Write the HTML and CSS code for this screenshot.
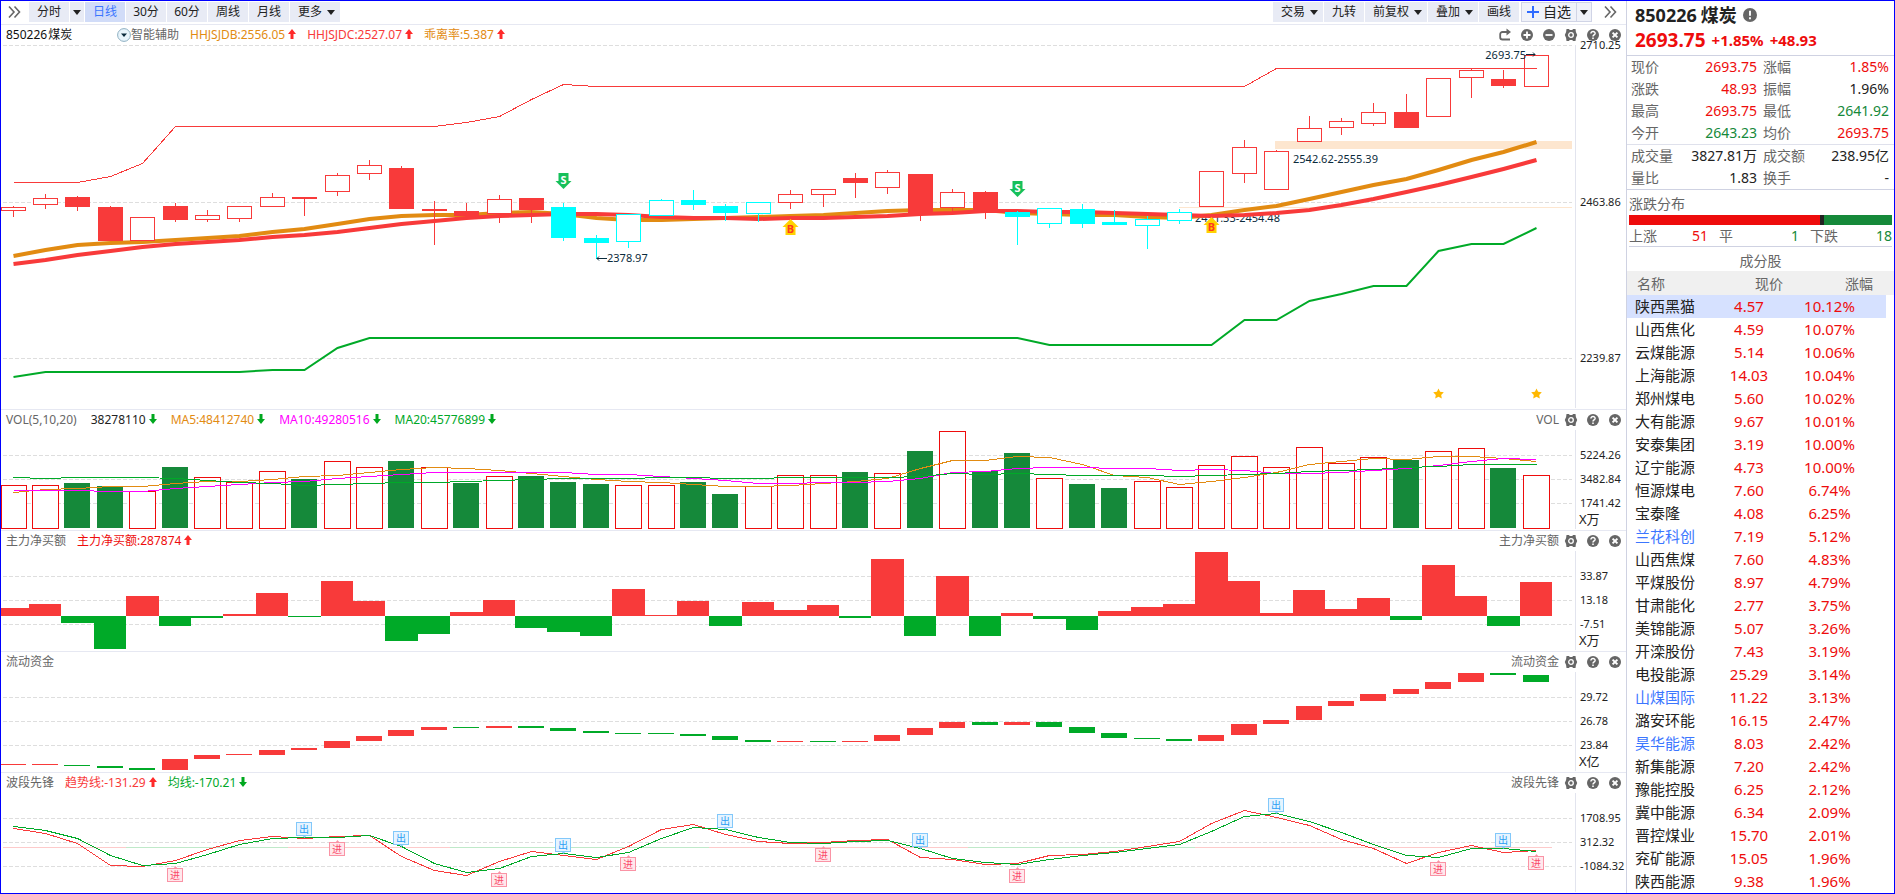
FILE: index.html
```html
<!DOCTYPE html>
<html lang="zh-CN">

<head>
    <meta charset="UTF-8">
    <meta name="viewport" content="width=device-width, initial-scale=1.0">
    <title>850226 煤炭</title>
    <link rel="stylesheet" href="styles.css">
</head>

<body>
    <!-- Shared icons -->
    <svg class="sprite" aria-hidden="true">
        <symbol id="i-chevrons" viewBox="0 0 14 14"><path d="M2 1.5 7 7l-5 5.5M7.5 1.5l5 5.5-5 5.5" fill="none" stroke="currentColor" stroke-width="1.6"/></symbol>
        <symbol id="i-share" viewBox="0 0 14 14"><path d="M10 4H4.5A2.3 2.3 0 0 0 2.200 6.300v2.900a2.300 2.300 0 0 0 2.300 2.300H12" fill="none" stroke="currentColor" stroke-width="1.8"/><path d="M8.500 0.500 13 4 8.500 7.500z" fill="currentColor"/></symbol>
        <symbol id="i-plus" viewBox="0 0 14 14"><circle cx="7" cy="7" r="6" fill="currentColor"/><path d="M3.500 7h7M7 3.500v7" stroke="#fff" stroke-width="1.8"/></symbol>
        <symbol id="i-minus" viewBox="0 0 14 14"><circle cx="7" cy="7" r="6" fill="currentColor"/><path d="M3.500 7h7" stroke="#fff" stroke-width="1.8"/></symbol>
        <symbol id="i-gear" viewBox="0 0 14 14"><path d="M2.500 1h2.500l.7.9h2.600L9 1h2.500l.4 3L13.200 7l-1.300 3-.4 3H9l-.7-.9H5.700L5 13H2.500l-.4-3L.8 7l1.300-3z" fill="currentColor"/><circle cx="7" cy="7" r="2.300" fill="none" stroke="#fff" stroke-width="1.3"/></symbol>
        <symbol id="i-help" viewBox="0 0 14 14"><circle cx="7" cy="7" r="6" fill="currentColor"/><path d="M4.900 5.600C4.900 2.700 9.200 3 9.100 5.400 9 6.900 7 6.800 7 8.500" fill="none" stroke="#fff" stroke-width="1.5"/><path d="M6.200 9.500h1.600V11H6.200z" fill="#fff"/></symbol>
        <symbol id="i-close" viewBox="0 0 14 14"><circle cx="7" cy="7" r="6" fill="currentColor"/><path d="m4.600 4.600 4.800 4.800M9.400 4.600 4.600 9.400" stroke="#fff" stroke-width="2"/></symbol>
        <symbol id="i-info" viewBox="0 0 14 14"><circle cx="7" cy="7" r="7" fill="currentColor"/><path d="M7 2.800v5M7 9.200v2" stroke="#fff" stroke-width="1.9"/></symbol>
        <symbol id="i-up" viewBox="0 0 8 10"><path d="M4 0 8 5H5.500v5h-3V5H0z" fill="currentColor"/></symbol>
        <symbol id="i-down" viewBox="0 0 8 10"><path d="M4 10 0 5h2.500V0h3v5H8z" fill="currentColor"/></symbol>
    </svg>

    <div class="app">
        <main class="charts">
            <nav class="toolbar">
                <button class="chevrons" aria-label="收起"><svg><use href="#i-chevrons"/></svg></button>
                <div class="tool-group">
                    <button class="tool">分时</button>
                    <button class="tool caret-only" aria-label="分时选项"><i class="caret"></i></button>
                    <button class="tool active">日线</button>
                    <button class="tool">30分</button>
                    <button class="tool">60分</button>
                    <button class="tool">周线</button>
                    <button class="tool">月线</button>
                    <button class="tool with-caret">更多<i class="caret"></i></button>
                </div>
                <div class="tool-group right">
                    <button class="tool with-caret">交易<i class="caret"></i></button>
                    <button class="tool">九转</button>
                    <button class="tool with-caret">前复权<i class="caret"></i></button>
                    <button class="tool with-caret">叠加<i class="caret"></i></button>
                    <button class="tool">画线</button>
                    <div class="favorite">
                        <button class="add"><svg viewBox="0 0 12 12"><path d="M0 6h12M6 0v12" stroke="#2f6bff" stroke-width="2"/></svg>自选</button>
                        <button class="add-more" aria-label="自选分组"><i class="caret"></i></button>
                    </div>
                </div>
                <button class="chevrons" aria-label="展开"><svg><use href="#i-chevrons"/></svg></button>
            </nav>

            <section class="panel main-panel">
                <header class="panel-head">
                    <span class="stock"><span>850226</span><span>煤炭</span></span>
                    <button class="assist"><svg viewBox="0 0 14 14"><circle cx="7" cy="7" r="6.4" fill="#e8f4fb" stroke="#8fb0c2"/><path d="M4 5.500h6L7 9z" fill="#0b2b3c"/></svg>智能辅助</button>
                    <span class="orange">HHJSJDB:2556.05<svg class="arrow up"><use href="#i-up"/></svg></span>
                    <span class="red">HHJSJDC:2527.07<svg class="arrow up"><use href="#i-up"/></svg></span>
                    <span class="orange">乖离率:5.387<svg class="arrow up"><use href="#i-up"/></svg></span>
                    <div class="actions">
                        <button aria-label="复权"><svg><use href="#i-share"/></svg></button>
                        <button aria-label="放大"><svg><use href="#i-plus"/></svg></button>
                        <button aria-label="缩小"><svg><use href="#i-minus"/></svg></button>
                        <button aria-label="设置"><svg><use href="#i-gear"/></svg></button>
                        <button aria-label="帮助"><svg><use href="#i-help"/></svg></button>
                        <button aria-label="关闭"><svg><use href="#i-close"/></svg></button>
                    </div>
                </header>
                <svg class="plot" id="kline"></svg>
            </section>

            <section class="panel">
                <header class="panel-head wide">
                    <span class="name">VOL(5,10,20)</span>
                    <span class="black">38278110<svg class="arrow down"><use href="#i-down"/></svg></span>
                    <span class="orange">MA5:48412740<svg class="arrow down"><use href="#i-down"/></svg></span>
                    <span class="magenta">MA10:49280516<svg class="arrow down"><use href="#i-down"/></svg></span>
                    <span class="green">MA20:45776899<svg class="arrow down"><use href="#i-down"/></svg></span>
                    <div class="actions">
                        <span class="tag">VOL</span>
                        <button aria-label="设置"><svg><use href="#i-gear"/></svg></button>
                        <button aria-label="帮助"><svg><use href="#i-help"/></svg></button>
                        <button aria-label="关闭"><svg><use href="#i-close"/></svg></button>
                    </div>
                </header>
                <svg class="plot" id="volume"></svg>
            </section>

            <section class="panel">
                <header class="panel-head">
                    <span class="name">主力净买额</span>
                    <span class="strong-red">主力净买额:287874<svg class="arrow up"><use href="#i-up"/></svg></span>
                    <div class="actions">
                        <span class="tag">主力净买额</span>
                        <button aria-label="设置"><svg><use href="#i-gear"/></svg></button>
                        <button aria-label="帮助"><svg><use href="#i-help"/></svg></button>
                        <button aria-label="关闭"><svg><use href="#i-close"/></svg></button>
                    </div>
                </header>
                <svg class="plot" id="netbuy"></svg>
            </section>

            <section class="panel">
                <header class="panel-head">
                    <span class="name">流动资金</span>
                    <div class="actions">
                        <span class="tag">流动资金</span>
                        <button aria-label="设置"><svg><use href="#i-gear"/></svg></button>
                        <button aria-label="帮助"><svg><use href="#i-help"/></svg></button>
                        <button aria-label="关闭"><svg><use href="#i-close"/></svg></button>
                    </div>
                </header>
                <svg class="plot" id="funds"></svg>
            </section>

            <section class="panel">
                <header class="panel-head">
                    <span class="name">波段先锋</span>
                    <span class="red">趋势线:-131.29<svg class="arrow up"><use href="#i-up"/></svg></span>
                    <span class="green">均线:-170.21<svg class="arrow down"><use href="#i-down"/></svg></span>
                    <div class="actions">
                        <span class="tag">波段先锋</span>
                        <button aria-label="设置"><svg><use href="#i-gear"/></svg></button>
                        <button aria-label="帮助"><svg><use href="#i-help"/></svg></button>
                        <button aria-label="关闭"><svg><use href="#i-close"/></svg></button>
                    </div>
                </header>
                <svg class="plot" id="wave"></svg>
            </section>
        </main>

        <aside class="side">
            <header class="quote-head">
                <h1><span>850226</span><span>煤炭</span><svg><use href="#i-info"/></svg></h1>
                <p><span class="price">2693.75</span><span>+1.85%</span><span>+48.93</span></p>
            </header>

            <dl class="quote">
                <div><dt>现价</dt><dd class="rise">2693.75</dd></div>
                <div><dt>涨幅</dt><dd class="rise">1.85%</dd></div>
                <div><dt>涨跌</dt><dd class="rise">48.93</dd></div>
                <div><dt>振幅</dt><dd>1.96%</dd></div>
                <div><dt>最高</dt><dd class="rise">2693.75</dd></div>
                <div><dt>最低</dt><dd class="fall">2641.92</dd></div>
                <div><dt>今开</dt><dd class="fall">2643.23</dd></div>
                <div><dt>均价</dt><dd class="rise">2693.75</dd></div>
            </dl>
            <dl class="quote">
                <div><dt>成交量</dt><dd>3827.81万</dd></div>
                <div><dt>成交额</dt><dd>238.95亿</dd></div>
                <div><dt>量比</dt><dd>1.83</dd></div>
                <div><dt>换手</dt><dd>-</dd></div>
            </dl>

            <section class="spread">
                <h2>涨跌分布</h2>
                <div class="spread-bar">
                    <span class="bar-up" style="flex-grow: 51"></span>
                    <span class="bar-flat"></span>
                    <span class="bar-down" style="flex-grow: 18"></span>
                </div>
                <dl>
                    <div><dt>上涨</dt><dd class="rise">51</dd></div>
                    <div><dt>平</dt><dd class="fall">1</dd></div>
                    <div><dt>下跌</dt><dd class="fall">18</dd></div>
                </dl>
            </section>

            <h2 class="list-title">成分股</h2>
            <table class="stocks">
                <thead>
                    <tr><th>名称</th><th>现价</th><th>涨幅</th></tr>
                </thead>
                <tbody>
                    <tr class="selected"><td>陕西黑猫</td><td>4.57</td><td>10.12%</td></tr>
                    <tr><td>山西焦化</td><td>4.59</td><td>10.07%</td></tr>
                    <tr><td>云煤能源</td><td>5.14</td><td>10.06%</td></tr>
                    <tr><td>上海能源</td><td>14.03</td><td>10.04%</td></tr>
                    <tr><td>郑州煤电</td><td>5.60</td><td>10.02%</td></tr>
                    <tr><td>大有能源</td><td>9.67</td><td>10.01%</td></tr>
                    <tr><td>安泰集团</td><td>3.19</td><td>10.00%</td></tr>
                    <tr><td>辽宁能源</td><td>4.73</td><td>10.00%</td></tr>
                    <tr><td>恒源煤电</td><td>7.60</td><td>6.74%</td></tr>
                    <tr><td>宝泰隆</td><td>4.08</td><td>6.25%</td></tr>
                    <tr class="watched"><td>兰花科创</td><td>7.19</td><td>5.12%</td></tr>
                    <tr><td>山西焦煤</td><td>7.60</td><td>4.83%</td></tr>
                    <tr><td>平煤股份</td><td>8.97</td><td>4.79%</td></tr>
                    <tr><td>甘肃能化</td><td>2.77</td><td>3.75%</td></tr>
                    <tr><td>美锦能源</td><td>5.07</td><td>3.26%</td></tr>
                    <tr><td>开滦股份</td><td>7.43</td><td>3.19%</td></tr>
                    <tr><td>电投能源</td><td>25.29</td><td>3.14%</td></tr>
                    <tr class="watched"><td>山煤国际</td><td>11.22</td><td>3.13%</td></tr>
                    <tr><td>潞安环能</td><td>16.15</td><td>2.47%</td></tr>
                    <tr class="watched"><td>昊华能源</td><td>8.03</td><td>2.42%</td></tr>
                    <tr><td>新集能源</td><td>7.20</td><td>2.42%</td></tr>
                    <tr><td>豫能控股</td><td>6.25</td><td>2.12%</td></tr>
                    <tr><td>冀中能源</td><td>6.34</td><td>2.09%</td></tr>
                    <tr><td>晋控煤业</td><td>15.70</td><td>2.01%</td></tr>
                    <tr><td>兖矿能源</td><td>15.05</td><td>1.96%</td></tr>
                    <tr><td>陕西能源</td><td>9.38</td><td>1.96%</td></tr>
                </tbody>
            </table>
        </aside>
    </div>

    <script src="charts.js"></script>
</body>

</html>
```
FILE: styles.css
```css
* {
    box-sizing: border-box;
}

body {
    margin: 0;
    font-family: "Noto Sans", "Noto Sans CJK SC", sans-serif;
    font-size: 12px;
    color: #222;
    background-color: #fff;
}

h1, h2, p, dl, dd {
    margin: 0;
}

button {
    border: none;
    background: none;
    padding: 0;
    margin: 0;
    font: inherit;
    color: inherit;
    cursor: pointer;
}

.sprite {
    display: none;
}

.app {
    display: grid;
    grid-template-columns: minmax(0, 1fr) 268px;
    height: 100vh;
    border: 1px solid #0000ff;
    overflow: hidden;
}

.charts {
    display: flex;
    flex-direction: column;
    min-height: 0;
}

/* Toolbar */
.toolbar {
    display: flex;
    align-items: center;
    height: 24px;
    padding: 0 9px 1px 6px;
    gap: 8px;
    border-bottom: 1px solid #e6e8f2;
    flex: none;
}

.chevrons {
    display: flex;
    color: #666;
}

.chevrons svg {
    width: 14px;
    height: 14px;
}

.tool-group {
    display: flex;
    align-items: center;
    gap: 1px;
}

.tool-group.right {
    margin-left: auto;
}

.tool {
    display: flex;
    align-items: center;
    justify-content: center;
    gap: 5px;
    height: 20px;
    min-width: 40px;
    line-height: 20px;
    background-color: #e8ebf5;
}

.tool.active {
    background-color: #d1dcf8;
    color: #3b76ff;
}

.tool.with-caret {
    padding: 0 5px 0 8px;
}

.tool.caret-only {
    min-width: 14px;
    width: 14px;
}

.caret {
    border: 4px solid transparent;
    border-top: 5px solid #222;
    border-bottom: none;
}

.favorite {
    display: flex;
    height: 20px;
    margin: 0 3px 0 1px;
    border: 1px solid #d0d4e6;
    background-color: #f0f2f9;
}

.add {
    display: flex;
    align-items: center;
    gap: 4px;
    padding: 0 5px;
    font-size: 14px;
    line-height: 18px;
}

.add svg {
    width: 12px;
    height: 12px;
}

.add-more {
    padding: 0 3px;
    border-left: 1px solid #d0d4e6;
}

.add-more .caret {
    display: block;
}

/* Chart panels */
.panel {
    display: flex;
    flex-direction: column;
    height: 121px;
    flex: none;
    border-bottom: 1px solid #e6e8f2;
}

.main-panel {
    flex: 1;
    min-height: 0;
}

.panel:last-child {
    border-bottom: none;
    height: 120px;
}

.panel-head {
    display: flex;
    align-items: center;
    gap: 11px;
    height: 20px;
    padding: 0 4px 0 5px;
    line-height: 20px;
    white-space: nowrap;
    flex: none;
}

.panel-head.wide {
    gap: 14px;
}

.stock {
    display: flex;
    gap: 1px;
    width: 100px;
    color: #111;
}

.assist {
    display: flex;
    align-items: center;
    color: #666;
}

.assist svg {
    width: 14px;
    height: 14px;
}

.name, .tag {
    color: #666;
}

.tag {
    margin-right: -3px;
}

.arrow {
    width: 8px;
    height: 10px;
    margin-left: 3px;
}

.arrow.up {
    color: #ff2a2a;
}

.arrow.down {
    color: #00a81f;
}

.orange {
    color: #e28b12;
}

.red {
    color: #f83a3a;
}

.strong-red {
    color: #ee0c0c;
}

.magenta {
    color: #ff00ff;
}

.green {
    color: #00a828;
}

.black {
    color: #222;
}

.actions {
    display: flex;
    align-items: center;
    gap: 8px;
    margin-left: auto;
    color: #666;
}

.actions button {
    display: flex;
}

.actions svg {
    width: 14px;
    height: 14px;
}

.plot {
    display: block;
    width: 100%;
    flex: 1;
    min-height: 0;
    overflow: visible;
}

/* Chart drawing */
.plot polyline {
    fill: none;
    stroke-width: 1px;
    shape-rendering: crispEdges;
}

.plot polyline.thick {
    stroke-width: 4px;
    shape-rendering: auto;
}

.plot polyline.medium {
    stroke-width: 2px;
    shape-rendering: auto;
}

.plot rect,
.plot line {
    shape-rendering: crispEdges;
}

.grid-line {
    stroke: #dedede;
    stroke-dasharray: 4 2;
}

.axis-line {
    stroke: #e2e4ee;
}

.axis-label {
    font-size: 11px;
    fill: #222;
}

.axis-unit {
    font-size: 13px;
    fill: #222;
}

.note {
    font-size: 11px;
    fill: #0b2b3c;
}

.note-arrow {
    fill: none;
    stroke: #0b2b3c;
}

.gap-zone {
    fill: #fde6cf;
}

.mark-letter {
    font-size: 11px;
    font-weight: bold;
    text-anchor: middle;
}

.wave-letter {
    font-size: 10px;
    text-anchor: middle;
}

/* Side column */
.side {
    border-left: 1px solid #cfd2e2;
    font-size: 14px;
    overflow: hidden;
}

.quote-head {
    height: 55px;
    padding: 1px 8px 0;
    border-bottom: 1px solid #cfd2e2;
    white-space: nowrap;
}

.quote-head h1 {
    display: flex;
    align-items: center;
    gap: 4px;
    font-size: 18px;
    line-height: 26px;
}

.quote-head h1 svg {
    width: 14px;
    height: 14px;
    margin-left: 2px;
    color: #666;
}

.quote-head p {
    display: flex;
    align-items: center;
    gap: 6px;
    font-size: 15px;
    font-weight: bold;
    line-height: 25px;
    color: #ee0c0c;
}

.quote-head .price {
    font-size: 19px;
}

.quote {
    display: grid;
    grid-template-columns: 1fr 1fr;
    column-gap: 6px;
    padding: 0 5px 0 4px;
    line-height: 22px;
    border-bottom: 1px solid #dfe1ec;
}

.quote div,
.spread dl div {
    display: flex;
    justify-content: space-between;
}

.quote dt,
.spread dt {
    color: #666;
}

.quote + .quote {
    border-color: #cfd2e2;
}

.rise {
    color: #ee0c0c;
}

.fall {
    color: #15893a;
}

.spread {
    margin: 0 2px;
    padding-top: 4px;
    border-bottom: 1px solid #cfd2e2;
}

.side h2 {
    font-size: 14px;
    font-weight: normal;
    line-height: 20px;
    color: #666;
}

.spread-bar {
    display: flex;
    height: 10px;
    margin-top: 1px;
}

.bar-up {
    background-color: #ee0c0c;
}

.bar-flat {
    width: 4px;
    background-color: #222;
}

.bar-down {
    background-color: #15893a;
}

.spread dl {
    display: grid;
    grid-template-columns: 79px 80px 1fr;
    column-gap: 11px;
    line-height: 21px;
}

.side .list-title {
    padding-top: 4px;
    text-align: center;
}

.stocks {
    width: 259px;
    table-layout: fixed;
    border-collapse: collapse;
    font-size: 15px;
    line-height: 23px;
}

.stocks th {
    height: 24px;
    padding: 0;
    font-size: 14px;
    font-weight: normal;
    color: #666;
    text-align: right;
    background-color: #f0f0f0;
}

.stocks th:nth-child(1) {
    width: 82px;
    padding-left: 10px;
    text-align: left;
}

.stocks th:nth-child(2) {
    width: 80px;
    padding-right: 6px;
}

.stocks th:nth-child(3) {
    padding-right: 13px;
    box-shadow: 8px 0 #f0f0f0;
}

.stocks td {
    height: 23px;
    padding: 0;
    text-align: center;
    color: #ee0c0c;
    white-space: nowrap;
}

.stocks td:nth-child(1) {
    padding-left: 8px;
    text-align: left;
    color: #222;
}

.stocks td:nth-child(3) {
    padding-right: 16px;
}

.stocks .watched td:nth-child(1) {
    color: #3b76ff;
}

.stocks .selected td {
    background-color: #d6e1ff;
}
```
FILE: charts.js
```javascript
const RED = '#f83a3a';
const GREEN = '#00aa28';
const CYAN = '#00ffff';
const ORANGE = '#e28b12';
const DARK_RED = '#ee0c0c';
const DARK_GREEN = '#15893a';

// body top, body bottom, high, low, kind
// kind: o = hollow red, r = solid red, c = hollow cyan, C = solid cyan
const candles = [
    [207, 210, 206, 217, 'o'], [198, 204, 194, 209, 'o'], [197, 207, 196, 211, 'r'], [207, 241, 206, 241, 'r'],
    [217, 240, 217, 240, 'o'], [206, 220, 203, 222, 'r'], [215, 219, 210, 222, 'o'], [206, 218, 206, 222, 'o'],
    [197, 206, 193, 207, 'o'], [197, 199, 197, 216, 'r'], [175, 191, 173, 196, 'o'], [165, 173, 160, 180, 'o'],
    [168, 209, 166, 209, 'r'], [209, 211, 201, 245, 'r'], [211, 216, 203, 219, 'r'], [199, 213, 195, 223, 'o'],
    [198, 210, 198, 223, 'r'], [207, 238, 203, 241, 'C'], [238, 243, 235, 259, 'C'], [214, 241, 214, 248, 'c'],
    [200, 215, 199, 216, 'c'], [200, 205, 190, 210, 'C'], [206, 213, 204, 221, 'C'], [202, 213, 202, 222, 'c'],
    [194, 202, 190, 209, 'o'], [189, 194, 189, 207, 'o'], [178, 183, 173, 198, 'r'], [172, 187, 170, 194, 'o'],
    [174, 213, 174, 221, 'r'], [192, 207, 189, 211, 'o'], [192, 212, 191, 219, 'r'], [212, 217, 211, 245, 'C'],
    [208, 223, 208, 228, 'c'], [209, 224, 204, 228, 'C'], [222, 225, 210, 225, 'C'], [219, 225, 216, 249, 'c'],
    [212, 220, 209, 224, 'c'], [171, 206, 171, 207, 'o'], [147, 173, 140, 183, 'o'], [151, 189, 150, 190, 'o'],
    [128, 141, 116, 142, 'o'], [121, 127, 118, 135, 'o'], [112, 123, 103, 126, 'o'], [112, 128, 94, 128, 'r'],
    [78, 116, 78, 117, 'o'], [70, 77, 69, 98, 'o'], [79, 86, 70, 88, 'r'], [55, 86, 55, 87, 'o']
];

const upperLine = [182, 182, 182, 176, 163, 126, 126, 126, 126, 126, 126, 126, 126, 126, 122, 116, 99, 84,
    86, 86, 86, 86, 86, 86, 86, 86, 86, 86, 86, 86, 86, 86, 86, 86, 86, 86, 86, 86, 86, 68, 68, 68, 68, 68, 68, 68, 68, 68];
const lowerLine = [377, 372, 372, 372, 372, 372, 372, 372, 370, 370, 348, 338, 338, 338, 338, 338, 338, 338,
    338, 338, 338, 338, 338, 338, 338, 338, 338, 338, 338, 338, 338, 338, 345, 345, 345, 345, 345, 345, 320, 320,
    301, 294, 286, 286, 251, 244, 244, 228];
const fastLine = [256, 250, 245, 243, 242, 240, 238, 236, 232, 229, 224, 219, 216, 215, 215, 213, 212, 214, 218,
    220, 220, 219, 218, 217, 216, 215, 213, 211, 210, 210, 210, 213, 214, 215, 215, 217, 218, 215, 210, 206, 199,
    192, 185, 179, 170, 160, 152, 142];
const slowLine = [264, 260, 255, 251, 247, 244, 242, 240, 237, 235, 232, 228, 224, 221, 218, 216, 215, 214, 214,
    215, 217, 218, 218, 219, 218, 218, 217, 216, 214, 213, 211, 211, 212, 212, 213, 214, 215, 216, 215, 213, 210,
    205, 199, 192, 185, 177, 169, 160];

// volume bar tops, and which of them closed down
const volume = [485, 485, 483, 486, 491, 467, 477, 482, 471, 479, 461, 467, 461, 467, 483, 476, 476, 482, 484, 485,
    485, 482, 494, 486, 475, 475, 472, 473, 451, 431, 471, 453, 478, 484, 488, 481, 487, 465, 456, 467, 447, 463,
    457, 460, 451, 448, 468, 475];
const volumeDown = [2, 3, 5, 9, 12, 14, 16, 17, 18, 21, 22, 26, 28, 30, 31, 33, 34, 43, 46];
const ma5 = [492, 489, 488, 486, 486, 483, 481, 481, 479, 476, 475, 472, 469, 467, 468, 470, 473, 476, 479, 481,
    482, 484, 486, 486, 485, 483, 481, 478, 468, 460, 460, 456, 457, 464, 475, 477, 484, 481, 477, 472, 464, 461,
    458, 459, 456, 456, 458, 461];
const ma10 = [490, 490, 490, 491, 491, 488, 486, 484, 482, 481, 478, 476, 474, 472, 472, 472, 472, 472, 474, 474,
    476, 478, 480, 483, 483, 482, 482, 481, 478, 472, 471, 468, 467, 467, 468, 468, 470, 469, 470, 473, 473, 472,
    470, 468, 465, 461, 458, 459];
const ma20 = [477, 478, 477, 477, 477, 478, 480, 482, 483, 485, 484, 483, 482, 482, 481, 480, 479, 478, 478, 478,
    477, 477, 478, 478, 477, 477, 477, 477, 476, 473, 474, 473, 474, 475, 475, 475, 476, 475, 474, 473, 471, 470,
    469, 467, 466, 464, 464, 464];

const netBuy = [8, 12, -7, -33, 20, -10, -2, 2, 23, -1, 35, 15, -25, -18, 4, 16, -12, -16, -20, 27, 1, 15, -10, 14,
    6, 11, -2, 57, -20, 40, -20, 3, -3, -14, 5, 9, 12, 64, 35, 3, 26, 7, 18, -4, 51, 20, -10, 34];

// top, bottom, 1 = inflow
const funds = [
    [764, 765, 1], [764, 765, 1], [765, 766, 0], [766, 768, 0], [768, 770, 0], [759, 770, 1], [755, 759, 1],
    [754, 755, 1], [750, 755, 1], [748, 750, 1], [741, 748, 1], [736, 741, 1], [730, 736, 1], [727, 730, 1],
    [727, 728, 0], [726, 728, 1], [726, 728, 0], [728, 731, 0], [731, 733, 0], [733, 734, 0], [733, 734, 0],
    [734, 736, 0], [736, 740, 0], [740, 742, 0], [741, 742, 1], [741, 742, 0], [741, 742, 1], [735, 741, 1],
    [728, 735, 1], [722, 728, 1], [722, 725, 0], [722, 725, 1], [722, 727, 0], [727, 733, 0], [733, 738, 0],
    [738, 739, 0], [739, 741, 0], [735, 741, 1], [724, 735, 1], [720, 724, 1], [706, 720, 1], [701, 706, 1],
    [694, 701, 1], [689, 694, 1], [682, 689, 1], [673, 682, 1], [673, 675, 0], [675, 682, 0]
];

const trend = [828, 833, 843, 865, 866, 860, 849, 840, 836, 838, 836, 835, 856, 870, 875, 861, 851, 855, 859, 846,
    829, 824, 834, 841, 843, 842, 840, 839, 857, 859, 864, 863, 855, 854, 851, 846, 841, 823, 810, 817, 825, 839,
    848, 863, 852, 845, 852, 850];
const average = [826, 830, 838, 855, 865, 863, 854, 844, 838, 837, 837, 835, 846, 863, 872, 868, 856, 853, 857, 852,
    838, 827, 829, 837, 842, 843, 841, 840, 848, 858, 862, 864, 859, 855, 852, 848, 844, 831, 816, 813, 821, 832,
    844, 855, 857, 848, 848, 851];

const NS = 'http://www.w3.org/2000/svg';

// One drawing surface: x by bar index, y from the first row of the plot
function createPlot(id, top, baseHeight) {
    const svg = document.getElementById(id);
    svg.replaceChildren();
    const width = svg.clientWidth;
    const axis = width - 51;
    const step = (axis - 51) / 47;
    const scale = svg.clientHeight / baseHeight;

    const plot = {
        svg, width, axis, step,
        x: i => Math.floor(12 + i * step),
        y: v => Math.round((v - top) * scale),
        add(tag, attrs, text) {
            const el = document.createElementNS(NS, tag);
            for (const key in attrs) el.setAttribute(key, attrs[key]);
            if (text) el.textContent = text;
            svg.appendChild(el);
            return el;
        },
        line(values, color, cls) {
            // thin lines sit on a pixel row, wide ones between two rows
            const shift = cls ? 0 : 0.5;
            const points = values.map((v, i) => plot.x(i) + 0.5 + ',' + (plot.y(v) + shift)).join(' ');
            plot.add('polyline', { points, stroke: color, class: cls || '' });
        },
        box(i, y1, y2, w, color, hollow) {
            const start = plot.x(i) - Math.floor(w / 2);
            const left = Math.max(0, start);
            const right = start + w;
            const t = plot.y(y1);
            const h = Math.max(1, plot.y(y2) - t);
            if (hollow) {
                plot.add('rect', { x: left + 0.5, y: t + 0.5, width: right - left - 1, height: h, fill: '#fff', stroke: color });
            } else {
                plot.add('rect', { x: left, y: t, width: right - left, height: h, fill: color });
            }
        }
    };
    return plot;
}

function drawGrid(plot, labels, unit) {
    for (const [value, text] of labels) {
        const y = plot.y(value);
        plot.add('line', { x1: 2, x2: plot.axis - 3, y1: y + 0.5, y2: y + 0.5, class: 'grid-line' });
        plot.add('text', { x: plot.axis + 5, y: y + 4, class: 'axis-label' }, text);
    }
    plot.add('line', { x1: plot.axis + 0.5, x2: plot.axis + 0.5, y1: 0, y2: plot.svg.clientHeight - 1, class: 'axis-line' });
    if (unit) {
        plot.add('text', { x: plot.axis + 4, y: plot.svg.clientHeight - 6, class: 'axis-unit' }, unit);
    }
}

function drawSignal(plot, i, value, kind) {
    const x = plot.x(i) + 0.5;
    const y = plot.y(value);
    if (kind === 'S') {
        plot.add('path', { d: `M${x - 5} ${y}h10v8h3l-8 8-8-8h3z`, fill: '#16c05a' });
        plot.add('text', { x, y: y + 11, fill: '#fff', class: 'mark-letter' }, 'S');
    } else {
        plot.add('path', { d: `M${x} ${y}l8 8h-3v8h-10v-8h-3z`, fill: '#ffd200' });
        plot.add('text', { x, y: y + 14, fill: '#ff3a1e', class: 'mark-letter' }, 'B');
    }
}

function drawStar(plot, i, value) {
    const cx = plot.x(i) + 0.5;
    const cy = plot.y(value);
    const points = [];
    for (let k = 0; k < 10; k++) {
        const r = k % 2 ? 2.8 : 5.6;
        const a = Math.PI * (k / 5 - 0.5);
        points.push((cx + r * Math.cos(a)).toFixed(1) + ',' + (cy + r * Math.sin(a)).toFixed(1));
    }
    plot.add('polygon', { points: points.join(' '), fill: '#ffb800' });
}

function drawWaveMark(plot, i, value, out) {
    const x = plot.x(i);
    const y = plot.y(value);
    const stroke = out ? '#82c8fa' : '#fa93a5';
    const fill = out ? '#e6f4ff' : '#ffe8ec';
    plot.add('rect', { x: x - 7.5, y: y + 0.5, width: 15, height: 13, fill, stroke });
    const tip = out ? `M${x - 2} ${y + 13}h5l-2.5 3z` : `M${x - 2} ${y + 1}h5l-2.5 -3z`;
    plot.add('path', { d: tip, fill: stroke });
    plot.add('text', { x, y: y + 11, fill: out ? '#2b9df4' : '#fa4a68', class: 'wave-letter' }, out ? '出' : '进');
}

function drawKline() {
    const plot = createPlot('kline', 45, 364);
    drawGrid(plot, [[45, '2710.25'], [202, '2463.86'], [358, '2239.87']]);

    // price gaps still open
    const gapX = plot.x(39) - 1;
    plot.add('rect', { x: gapX, y: plot.y(141), width: plot.axis - 3 - gapX, height: 8, class: 'gap-zone' });
    plot.add('rect', { x: plot.x(36), y: plot.y(207), width: plot.axis - 3 - plot.x(36), height: 1, class: 'gap-zone' });
    plot.add('text', { x: plot.x(39) + 17, y: plot.y(163), class: 'note' }, '2542.62-2555.39');
    plot.add('text', { x: plot.x(37) - 16, y: plot.y(222), class: 'note' }, '2451.33-2454.48');

    plot.line(fastLine, ORANGE, 'thick');
    plot.line(slowLine, RED, 'thick');

    candles.forEach(([open, close, high, low, kind], i) => {
        const color = kind === 'c' || kind === 'C' ? CYAN : RED;
        const x = plot.x(i) + 0.5;
        plot.add('line', { x1: x, x2: x, y1: plot.y(high), y2: plot.y(low), stroke: color });
        plot.box(i, open, close, 25, color, kind === 'o' || kind === 'c');
    });

    plot.line(upperLine, RED);
    plot.line(lowerLine, GREEN, 'medium');

    drawSignal(plot, 17, 173, 'S');
    drawSignal(plot, 31, 181, 'S');
    drawSignal(plot, 24, 219, 'B');
    drawSignal(plot, 37, 217, 'B');
    drawStar(plot, 44, 394);
    drawStar(plot, 47, 394);

    const lowX = plot.x(18);
    const lowY = plot.y(258) + 0.5;
    plot.add('path', { d: `M${lowX + 11} ${lowY}h-10m2 -2l-2 2 2 2`, class: 'note-arrow' });
    plot.add('text', { x: lowX + 11, y: plot.y(262), class: 'note' }, '2378.97');
    const highX = plot.x(47);
    const highY = plot.y(54) + 0.5;
    plot.add('path', { d: `M${highX - 10} ${highY}h9m-2 -2l2 2-2 2`, class: 'note-arrow' });
    plot.add('text', { x: highX - 10, y: plot.y(59), class: 'note', 'text-anchor': 'end' }, '2693.75');
}

function drawVolume() {
    const plot = createPlot('volume', 430, 100);
    drawGrid(plot, [[455, '5224.26'], [479, '3482.84'], [503, '1741.42']], 'X万');
    volume.forEach((v, i) => {
        const down = volumeDown.includes(i);
        plot.box(i, v, 528, down ? 26 : 27, down ? DARK_GREEN : DARK_RED, !down);
    });
    plot.line(ma5, ORANGE);
    plot.line(ma10, '#ff00ff');
    plot.line(ma20, GREEN);
}

function drawNetBuy() {
    const plot = createPlot('netbuy', 551, 100);
    drawGrid(plot, [[576, '33.87'], [600, '13.18'], [624, '-7.51']], 'X万');
    netBuy.forEach((v, i) => {
        const w = plot.x(i + 1) - plot.x(i);
        plot.box(i, v > 0 ? 616 - v : 616, v > 0 ? 616 : 616 - v, w, v > 0 ? RED : GREEN);
    });
}

function drawFunds() {
    const plot = createPlot('funds', 672, 100);
    drawGrid(plot, [[697, '29.72'], [721, '26.78'], [745, '23.84']], 'X亿');
    funds.forEach(([a, b, inflow], i) => plot.box(i, a, b, 26, inflow ? RED : GREEN));
}

function drawWave() {
    const plot = createPlot('wave', 793, 100);
    drawGrid(plot, [[818, '1708.95'], [842, '312.32'], [866, '-1084.32']]);

    // zero line, coloured by phase
    const ends = [3.5, 8.5, 13.5, 21.5, 29.5, 36.5, 47.5];
    let from = 2;
    ends.forEach((end, i) => {
        const to = plot.x(end);
        plot.add('rect', { x: from, y: plot.y(847), width: to - from, height: 1, fill: i % 2 ? '#bfe9c9' : '#fdcaca' });
        from = to;
    });

    plot.line(trend, RED);
    plot.line(average, GREEN);
    [[9, 822], [12, 831], [17, 838], [22, 814], [28, 833], [39, 798], [46, 833]]
        .forEach(([i, v]) => drawWaveMark(plot, i, v, true));
    [[5, 868], [10, 842], [15, 873], [19, 857], [25, 848], [31, 869], [44, 862], [47, 856]]
        .forEach(([i, v]) => drawWaveMark(plot, i, v, false));
}

function drawAll() {
    drawKline();
    drawVolume();
    drawNetBuy();
    drawFunds();
    drawWave();
}

window.addEventListener('resize', drawAll);
drawAll();
```
